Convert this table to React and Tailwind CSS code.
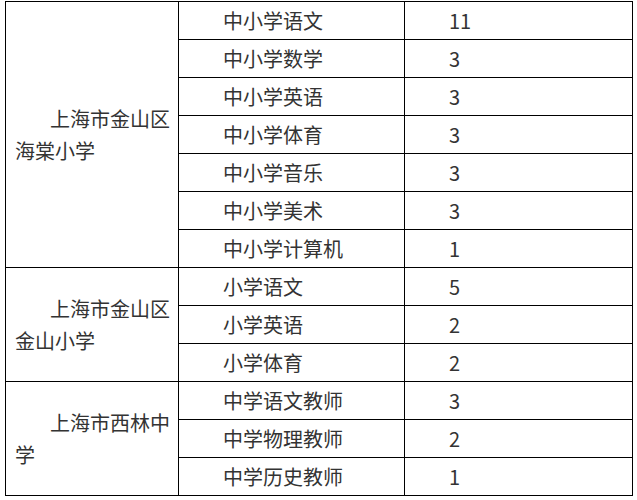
const groups = [
  {
    school: '上海市金山区海棠小学',
    rows: [
      ['中小学语文', '11'],
      ['中小学数学', '3'],
      ['中小学英语', '3'],
      ['中小学体育', '3'],
      ['中小学音乐', '3'],
      ['中小学美术', '3'],
      ['中小学计算机', '1'],
    ],
  },
  {
    school: '上海市金山区金山小学',
    rows: [
      ['小学语文', '5'],
      ['小学英语', '2'],
      ['小学体育', '2'],
    ],
  },
  {
    school: '上海市西林中学',
    rows: [
      ['中学语文教师', '3'],
      ['中学物理教师', '2'],
      ['中学历史教师', '1'],
    ],
  },
];

const cell = 'border border-black pl-[9px] pr-[5px] align-middle indent-[35px]';

export default function App() {
  return (
    <div
      className="bg-white w-[637px] h-[500px] pl-[5px] pt-[1px] text-[#333] text-[20px] leading-[32px]"
      style={{ fontFamily: '"Noto Sans CJK SC", "Noto Sans", sans-serif' }}
    >
      <table className="border-collapse table-fixed w-[627px]">
        <colgroup>
          <col className="w-[173px]" />
          <col className="w-[226px]" />
          <col className="w-[228px]" />
        </colgroup>
        <tbody>
          {groups.map((g) =>
            g.rows.map(([subject, count], i) => (
              <tr key={g.school + subject} className="h-[38px]">
                {i === 0 && (
                  <td rowSpan={g.rows.length} className={cell}>
                    {g.school}
                  </td>
                )}
                <td className={`${cell} whitespace-nowrap`}>{subject}</td>
                <td className={`${cell} whitespace-nowrap`}>{count}</td>
              </tr>
            ))
          )}
        </tbody>
      </table>
    </div>
  );
}
